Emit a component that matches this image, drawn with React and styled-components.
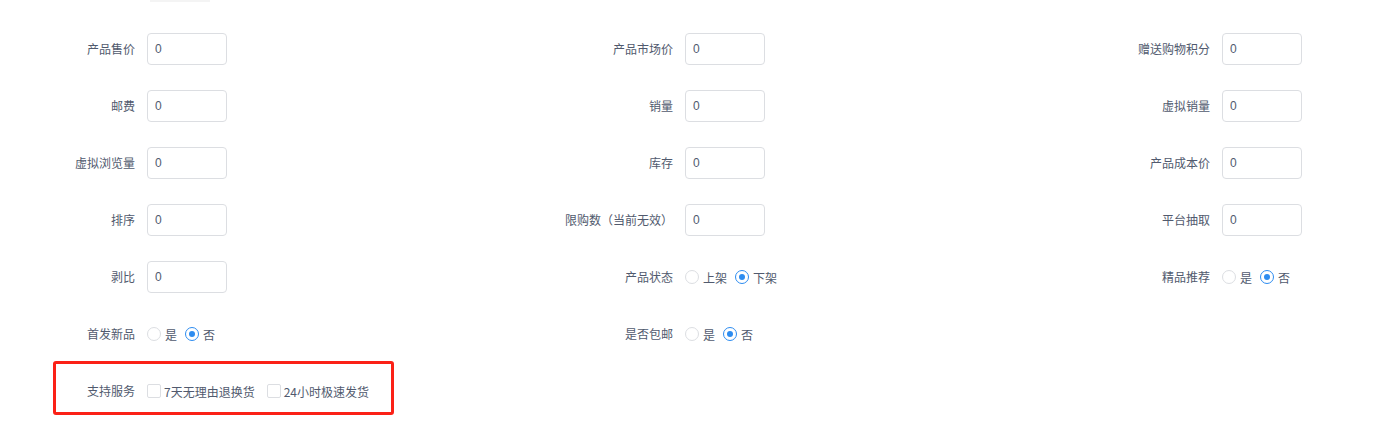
import React from 'react';
import styled, { createGlobalStyle } from 'styled-components';

const GlobalStyle = createGlobalStyle`
  html {
    overflow: hidden;
  }
  body {
    margin: 0;
    padding: 0;
    background: #fff;
    font-family: "Noto Sans CJK SC", "Noto Sans", sans-serif;
    font-size: 12px;
    color: #515a6e;
  }
`;

const fields = [
  [
    { label: '产品售价', type: 'input' },
    { label: '产品市场价', type: 'input' },
    { label: '赠送购物积分', type: 'input' },
  ],
  [
    { label: '邮费', type: 'input' },
    { label: '销量', type: 'input' },
    { label: '虚拟销量', type: 'input' },
  ],
  [
    { label: '虚拟浏览量', type: 'input' },
    { label: '库存', type: 'input' },
    { label: '产品成本价', type: 'input' },
  ],
  [
    { label: '排序', type: 'input' },
    { label: '限购数（当前无效）', type: 'input' },
    { label: '平台抽取', type: 'input' },
  ],
  [
    { label: '剥比', type: 'input' },
    { label: '产品状态', type: 'radio', options: ['上架', '下架'], checked: 1 },
    { label: '精品推荐', type: 'radio', options: ['是', '否'], checked: 1 },
  ],
  [
    { label: '首发新品', type: 'radio', options: ['是', '否'], checked: 1 },
    { label: '是否包邮', type: 'radio', options: ['是', '否'], checked: 1 },
    null,
  ],
];

export default function App() {
  return (
    <>
      <GlobalStyle />
      <Page>
        <TopHint />
        <Grid>
          {fields.flat().map((f, i) =>
            f ? (
              <FormItem key={i}>
                <Label>{f.label}</Label>
                {f.type === 'input' ? (
                  <Input defaultValue="0" />
                ) : (
                  <Options>
                    {f.options.map((o, j) => (
                      <Option key={o}>
                        <Radio $checked={j === f.checked} />
                        {o}
                      </Option>
                    ))}
                  </Options>
                )}
              </FormItem>
            ) : (
              <div key={i} />
            )
          )}
          <FormItem $marked>
            <Label>支持服务</Label>
            <Options $gap={12}>
              <Option $gap={3}>
                <Checkbox />
                7天无理由退换货
              </Option>
              <Option $gap={3}>
                <Checkbox />
                24小时极速发货
              </Option>
            </Options>
          </FormItem>
        </Grid>
      </Page>
    </>
  );
}

const Page = styled.div`
  padding: 0 0 30px 15px;
  width: 1369px;
`;

const TopHint = styled.div`
  margin-left: 135px;
  width: 60px;
  height: 2px;
  background: #f4f4f4;
  margin-bottom: 31px;
`;

const Grid = styled.div`
  display: grid;
  grid-template-columns: 538px 537px 1fr;
  row-gap: 25px;
`;

const FormItem = styled.div`
  position: relative;
  display: flex;
  align-items: center;
  height: 32px;

  ${({ $marked }) =>
    $marked &&
    `
    &::after {
      content: '';
      position: absolute;
      left: 38px;
      top: -14px;
      width: 335px;
      height: 48px;
      border: 3px solid #fb2117;
      border-radius: 3px;
    }
  `}
`;

const Label = styled.label`
  width: 120px;
  padding-right: 12px;
  text-align: right;
  line-height: 30px;
  font-size: 12px;
  color: #515a6e;
  white-space: nowrap;
`;

const Input = styled.input`
  box-sizing: border-box;
  width: 80px;
  height: 32px;
  padding: 0 7px;
  border: 1px solid #dcdee2;
  border-radius: 4px;
  font-family: "Liberation Sans", "Noto Sans", sans-serif;
  font-size: 12px;
  color: #515a6e;
  outline: none;
`;

const Options = styled.div`
  display: flex;
  align-items: center;
  gap: ${({ $gap }) => $gap ?? 8}px;
`;

const Option = styled.span`
  display: inline-flex;
  align-items: center;
  gap: ${({ $gap }) => $gap ?? 4}px;
  font-size: 12px;
  color: #515a6e;
  white-space: nowrap;
`;

const Radio = styled.span`
  position: relative;
  box-sizing: border-box;
  width: 14px;
  height: 14px;
  border-radius: 50%;
  border: 1px solid ${({ $checked }) => ($checked ? '#2d8cf0' : '#dcdee2')};
  background: #fff;

  &::after {
    content: '';
    display: ${({ $checked }) => ($checked ? 'block' : 'none')};
    position: absolute;
    left: 3px;
    top: 3px;
    width: 6px;
    height: 6px;
    border-radius: 50%;
    background: #2d8cf0;
  }
`;

const Checkbox = styled.span`
  box-sizing: border-box;
  width: 14px;
  height: 14px;
  border: 1px solid #dcdee2;
  border-radius: 2px;
  background: #fff;
`;
